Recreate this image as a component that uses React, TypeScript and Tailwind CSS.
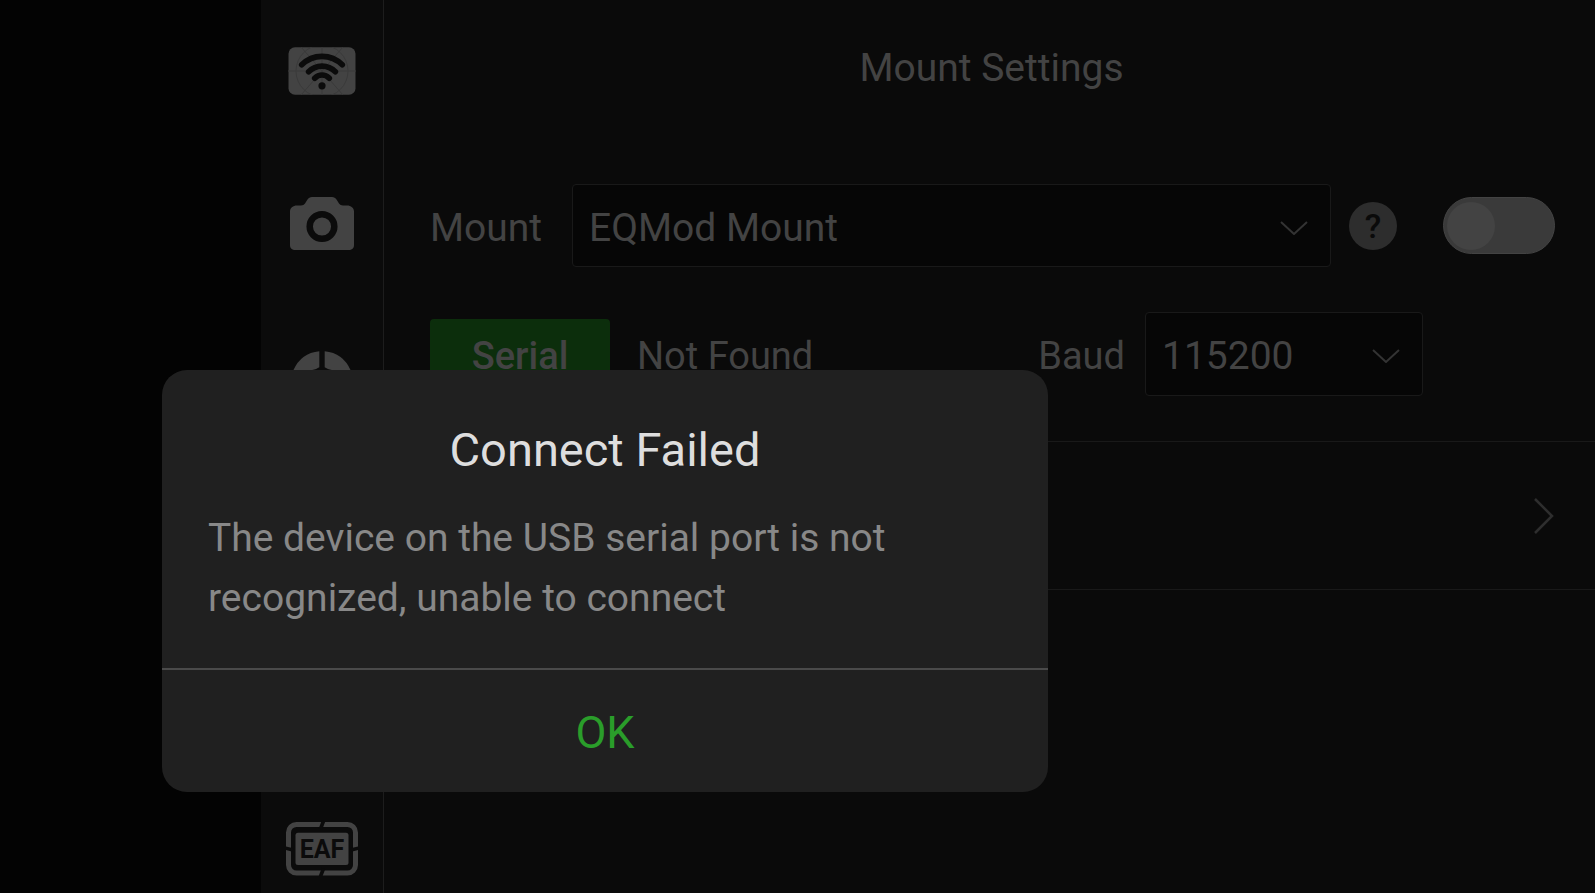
import { useState } from 'react';
import { Crosshair, Focus } from 'lucide-react';

const WifiIcon = () => (
  <svg viewBox="0 0 68 48" className="h-12 w-[68px]" fill="none">
    <rect x="0.500" y="0.300" width="67" height="47.400" rx="6.500" fill="#434343" />
    <g stroke="#3a3a3a" strokeWidth="1">
      <circle cx="34" cy="24" r="26" />
      <path d="M0 24h68M34 0v48M13 0l42 48M55 0L13 48" />
    </g>
    <g stroke="#0b0b0b" strokeWidth="5.600" strokeLinecap="round">
      <path d="M13.700 17.800C25 6.500 43 6.500 54.300 17.800" />
      <path d="M20.600 24.800c7.400-7.600 19.400-7.600 26.800 0" />
      <path d="M26.700 31.300c4.200-4.400 10.400-4.400 14.600 0" />
    </g>
    <circle cx="34" cy="38.800" r="3.600" fill="#0b0b0b" />
  </svg>
);

const CameraIcon = () => (
  <svg viewBox="0 0 64 60" className="h-[60px] w-16">
    <path
      d="M22 1h20c2 0 3.500 1 4.500 2.500L49 7.500c1 1.300 2 2 4 2h4c4 0 7 2.500 7 6V49c0 3.500-2 5-5.500 5h-53C2 54 0 52.500 0 49V15.500c0-3.500 3-6 7-6h4c2 0 3-.7 4-2l2.500-4C18.500 2 20 1 22 1z"
      fill="#434343"
    />
    <circle cx="32" cy="30.500" r="12.300" fill="none" stroke="#0b0b0b" strokeWidth="6.500" />
  </svg>
);

const WheelIcon = () => (
  <svg viewBox="0 0 60 60" className="h-[60px] w-[60px]" fill="#434343">
    <path d="M27.300 0.200v16q-3 2.300-7 2.800H1.500Q9 2 27.300 0.200z" />
    <path d="M32.700 0.200v16q3 2.300 7 2.800h18.800Q51 2 32.700 0.200z" />
    <path d="M0 23h18v14H0zM42 23h18v14H42zM9 43h42Q43 60 30 60 17 60 9 43z" />
  </svg>
);

const EafIcon = () => (
  <svg viewBox="0 -5 72 59" className="h-[59px] w-[72px]">
    <rect
      x="2.500"
      y="2.500"
      width="67"
      height="48.500"
      rx="8"
      fill="none"
      stroke="#434343"
      strokeWidth="5"
    />
    <g stroke="#0b0b0b" strokeWidth="3.600">
      <path d="M37.500-1l-3 8M37.500 46.500l-3 8M-1 26l8 2M65 28l8-2" />
    </g>
    <rect x="9.500" y="10.800" width="53" height="32.200" rx="2.500" fill="#434343" />
    <text
      x="36"
      y="36"
      textAnchor="middle"
      fontFamily="Roboto, sans-serif"
      fontSize="25"
      fontWeight="700"
      fill="#0b0b0b"
    >
      EAF
    </text>
  </svg>
);

const ChevronDown = () => (
  <svg
    viewBox="0 0 28 14"
    className="pointer-events-none absolute right-[23px] mt-1 h-3.5 w-7"
    fill="none"
    stroke="#333333"
    strokeWidth="2"
  >
    <path d="M1 1l13 12L27 1" />
  </svg>
);

const tabs = [
  { name: 'Wi-Fi', icon: <WifiIcon /> },
  { name: 'Camera', icon: <CameraIcon /> },
  { name: 'Filter wheel', icon: <WheelIcon /> },
  { name: 'Guide', icon: <Crosshair size={60} color="#434343" /> },
  { name: 'Focus', icon: <Focus size={60} color="#434343" /> },
  { name: 'EAF', icon: <EafIcon /> },
];

const Sidebar = () => (
  <nav className="flex w-[123px] shrink-0 flex-col gap-[13px] border-r border-[#1d1d1d] bg-[#0b0b0b]">
    {tabs.map((tab) => (
      <button
        key={tab.name}
        aria-label={tab.name}
        className="flex h-[142px] w-full shrink-0 items-center justify-center"
      >
        {tab.icon}
      </button>
    ))}
  </nav>
);

const MountSettings = () => {
  const [enabled, setEnabled] = useState(false);

  return (
    <main className="min-w-0 flex-1 bg-[#0a0a0a] text-[39px] leading-[48px] text-[#434343]">
      <h1 className="pt-11 pl-1 text-center">Mount Settings</h1>
      <div className="mt-[92px] flex items-center pr-10 pl-[46px]">
        <label htmlFor="mount" className="w-[142px] pt-1">
          Mount
        </label>
        <div className="relative flex flex-1 items-center">
          <select
            id="mount"
            className="h-[83px] w-full appearance-none rounded-sm border border-[#191919] bg-[#060606] px-4 pt-1"
          >
            <option>EQMod Mount</option>
          </select>
          <ChevronDown />
        </div>
        <button
          aria-label="Help"
          className="ml-[18px] flex h-12 w-12 items-center justify-center rounded-full bg-[#2d2d2d] text-[34px] font-medium text-[#0a0a0a]"
        >
          ?
        </button>
        <input
          type="checkbox"
          role="switch"
          aria-label="Connect mount"
          checked={enabled}
          onChange={(e) => setEnabled(e.target.checked)}
          className="ml-[46px] flex h-[57px] w-[112px] appearance-none items-center rounded-full border border-[#434343] bg-[#3a3a3a] px-[3px] before:h-12 before:w-12 before:rounded-full before:bg-[#434343] checked:justify-end"
        />
      </div>
      <div className="mt-[45px] flex items-center pr-[172px] pb-[45px] pl-[46px]">
        <button className="h-[70px] w-[180px] rounded-sm bg-[#0c2e0c] pt-1 text-[38px] font-medium">
          Serial
        </button>
        <span className="ml-[27px] pt-1 text-[38px]">Not Found</span>
        <label htmlFor="baud" className="mr-5 ml-auto pt-1 text-[38px]">
          Baud
        </label>
        <div className="relative flex w-[278px] items-center">
          <select
            id="baud"
            className="h-[84px] w-full appearance-none rounded-sm border border-[#191919] bg-[#060606] px-4 pt-1"
          >
            <option>115200</option>
          </select>
          <ChevronDown />
        </div>
      </div>
      <button
        aria-label="More mount settings"
        className="flex h-[149px] w-full items-center justify-end border-y border-[#191919] pr-[41px]"
      >
        <svg
          viewBox="0 0 20 36"
          className="h-9 w-5"
          fill="none"
          stroke="#2e2e2e"
          strokeWidth="2.500"
        >
          <path d="M1 1l17 17L1 35" />
        </svg>
      </button>
    </main>
  );
};

const ConnectFailedDialog = () => (
  <div
    role="alertdialog"
    aria-labelledby="dialog-title"
    className="absolute top-[370px] left-[162px] w-[886px] overflow-hidden rounded-[25px] bg-[#202020]"
  >
    <h2
      id="dialog-title"
      className="pt-[52px] text-center text-[47px] leading-[56px] text-[#dedede]"
    >
      Connect Failed
    </h2>
    <p className="px-[46px] pt-[30px] pb-10 text-[39px] leading-[60px] text-[#888888]">
      The device on the USB serial port is not recognized, unable to connect
    </p>
    <button className="h-[124px] w-full border-t-2 border-[#4a4a4a] pt-1 text-[45px] text-[#2a9d2a]">
      OK
    </button>
  </div>
);

const App = () => {
  return (
    <div className="relative flex h-screen overflow-hidden bg-[#030303] font-['Roboto',sans-serif]">
      <div className="w-[261px] shrink-0" />
      <Sidebar />
      <MountSettings />
      <ConnectFailedDialog />
    </div>
  );
};

export default App;
